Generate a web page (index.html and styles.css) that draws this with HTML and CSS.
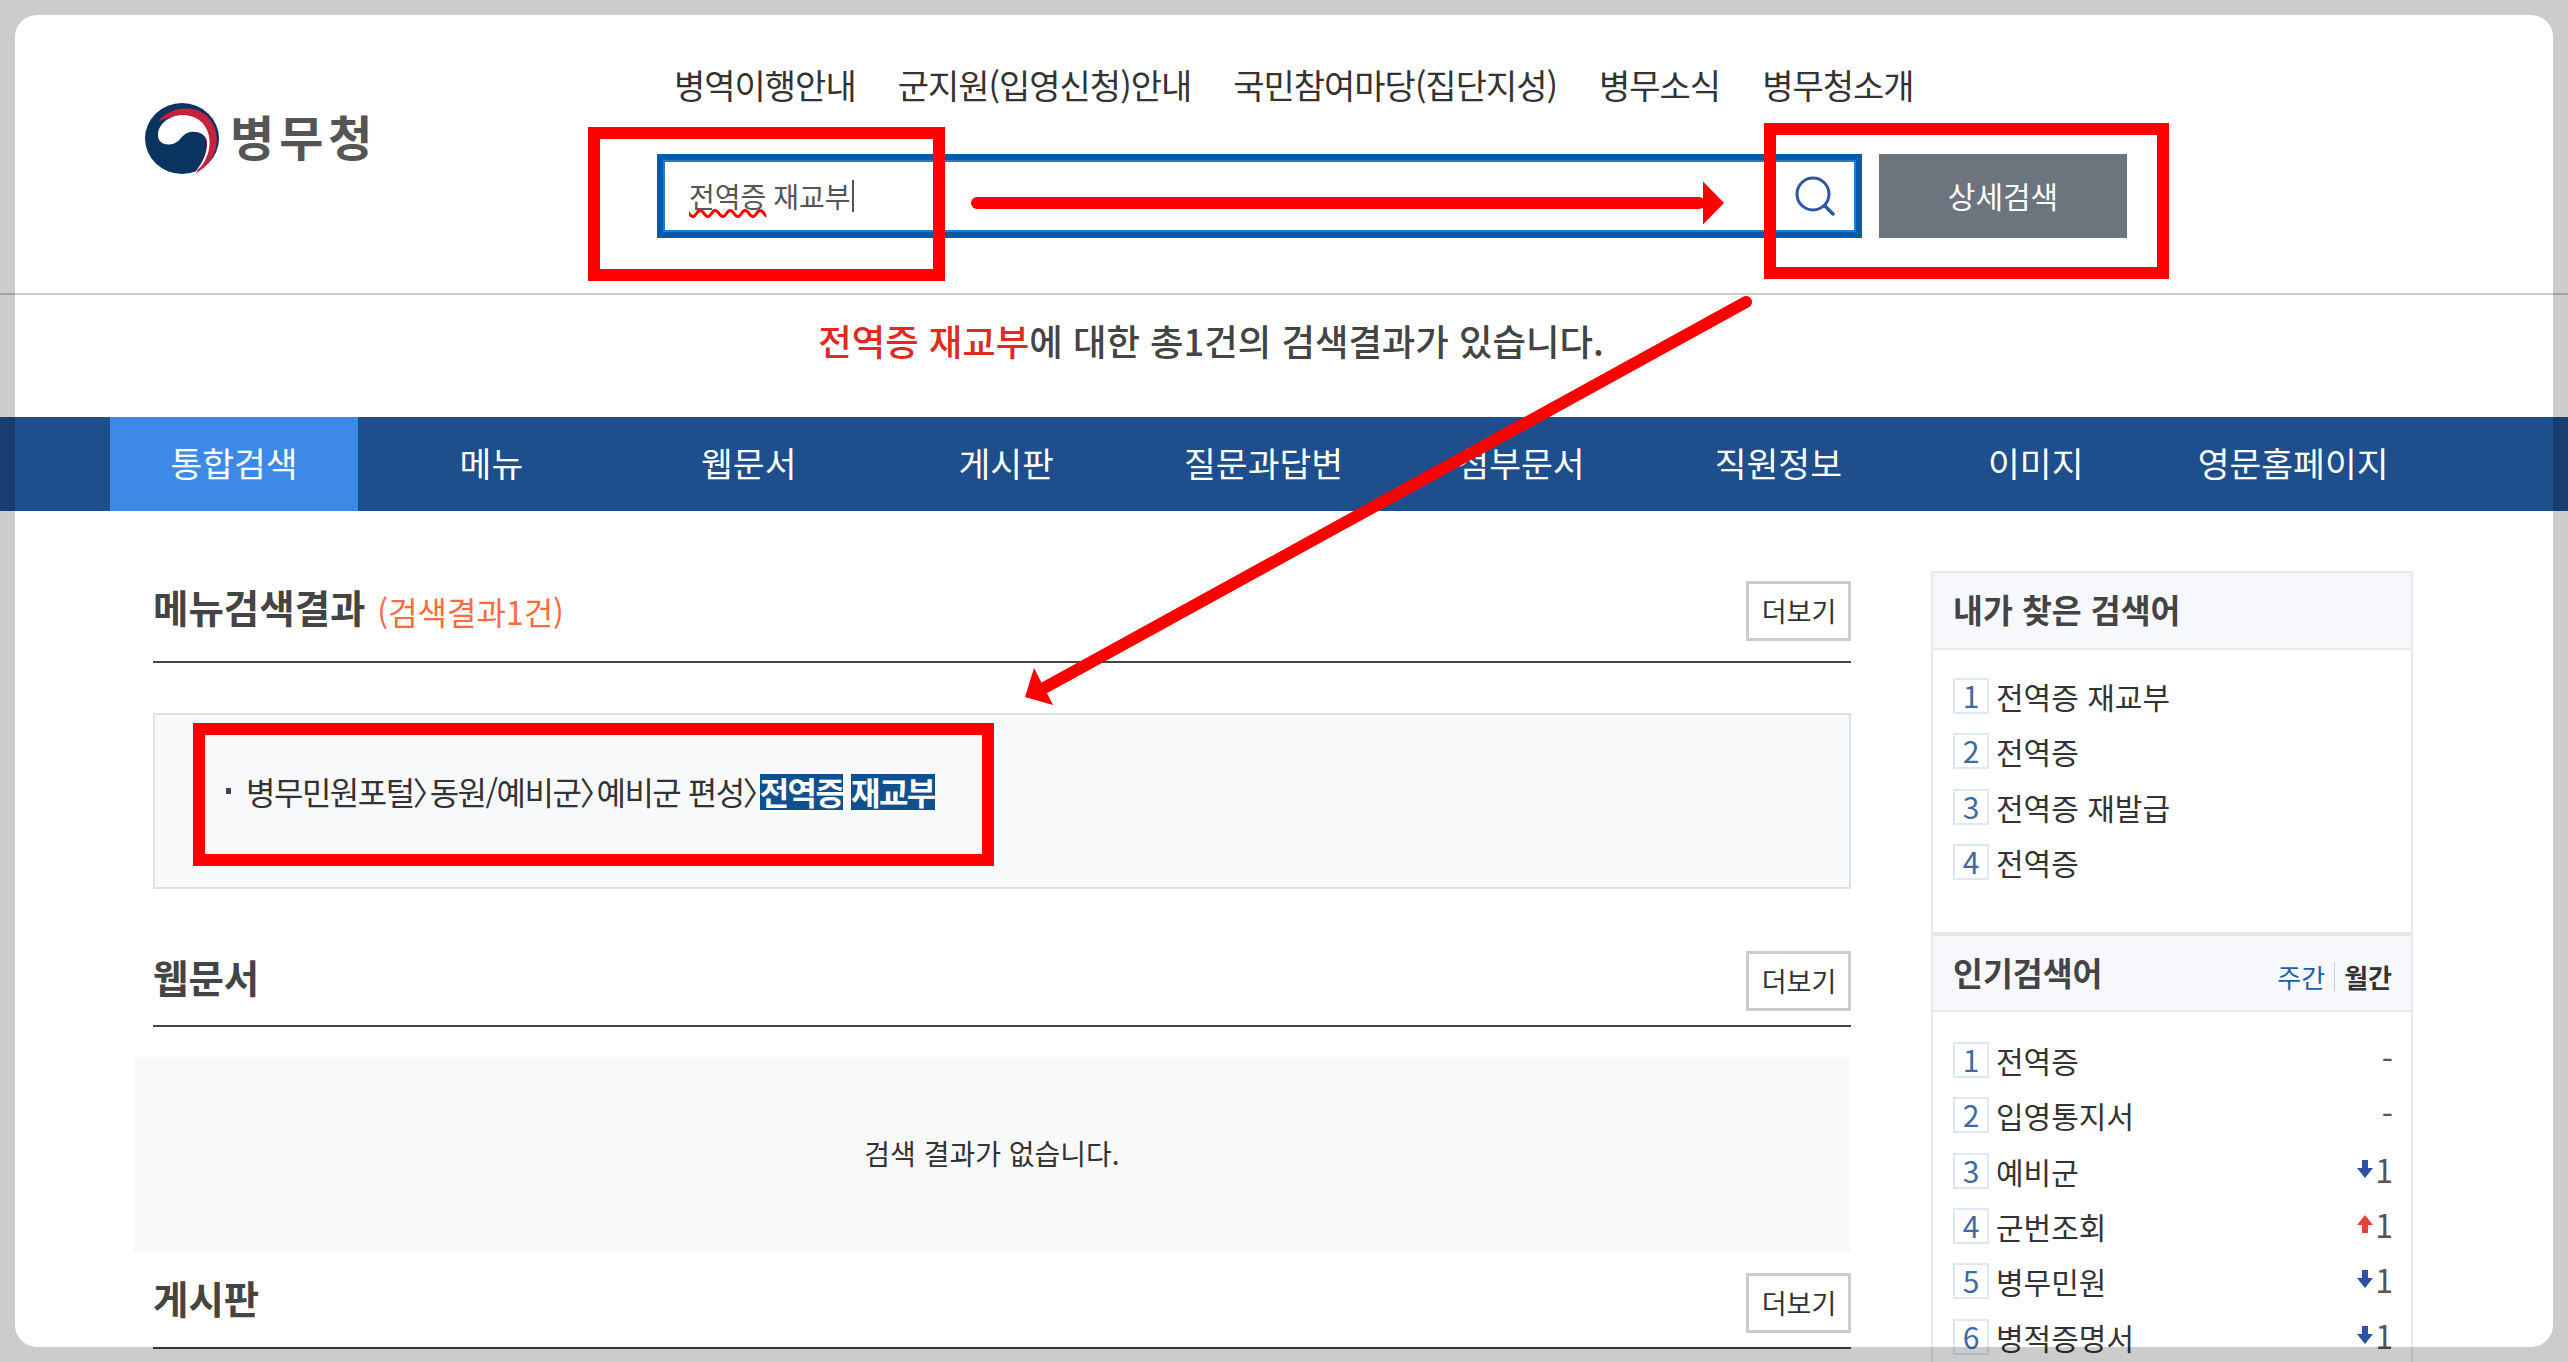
FILE: index.html
```html
<!DOCTYPE html>
<html lang="ko">
<head>
  <meta charset="UTF-8">
  <title>병무청 통합검색</title>
  <link rel="stylesheet" href="styles.css">
</head>
<body>
  <div class="page">
    <header class="top">
      <a class="logo">
        <svg class="logo-mark" viewBox="0 0 74 71" width="74" height="71">
          <ellipse cx="37" cy="35.5" rx="37" ry="35.5" fill="#0b335f"/>
          <path d="M13 19C24 4 48 1 62 13C77 28 76 57 50 71C62 58 66 38 56 24C46 12 26 10 13 19Z" fill="#c8203f"/>
          <path d="M13 32C13 18 31 9 45 13C60 16 67 32 64 46C62 56 57 64 50 69C58 60 63 48 62 38C60 30 50 27 42 30C37 32 35 38 30 40C24 43 13 42 13 32Z" fill="#fff"/>
        </svg>
        <span class="logo-text">병무청</span>
      </a>
      <div class="top-center">
        <ul class="gnb">
          <li>병역이행안내</li>
          <li>군지원(입영신청)안내</li>
          <li>국민참여마당(집단지성)</li>
          <li>병무소식</li>
          <li>병무청소개</li>
        </ul>
        <div class="search-row">
          <div class="search-box">
            <div class="search-value"><span class="typo">전역증</span> 재교부<span class="caret"></span></div>
            <svg class="search-icon" viewBox="0 0 40 40" width="40" height="40">
              <circle cx="18" cy="18" r="16" fill="none" stroke="#2c56a8" stroke-width="3"/>
              <path d="M30 30L38 38" stroke="#2c56a8" stroke-width="3.5" stroke-linecap="round"/>
            </svg>
          </div>
          <div class="detail-btn">상세검색</div>
        </div>
      </div>
    </header>

    <p class="result-msg"><strong>전역증 재교부</strong>에 대한 총1건의 검색결과가 있습니다.</p>

    <nav class="tabs">
      <ul>
        <li class="on">통합검색</li>
        <li>메뉴</li>
        <li>웹문서</li>
        <li>게시판</li>
        <li>질문과답변</li>
        <li>첨부문서</li>
        <li>직원정보</li>
        <li>이미지</li>
        <li>영문홈페이지</li>
      </ul>
    </nav>

    <div class="content">
      <main class="results">
        <section class="sec sec-menu">
          <div class="sec-head">
            <h2>메뉴검색결과 <span class="count">(검색결과1건)</span></h2>
            <a class="more">더보기</a>
          </div>
          <div class="menu-box">
            <span class="dot"></span>
            <span class="path">병무민원포털<span class="sep">〉</span>동원/예비군<span class="sep">〉</span>예비군 편성<span class="sep">〉</span><mark>전역증</mark> <mark>재교부</mark></span>
          </div>
        </section>
        <section class="sec sec-web">
          <div class="sec-head">
            <h2>웹문서</h2>
            <a class="more">더보기</a>
          </div>
          <div class="empty">검색 결과가 없습니다.</div>
        </section>
        <section class="sec sec-board">
          <div class="sec-head">
            <h2>게시판</h2>
            <a class="more">더보기</a>
          </div>
        </section>
      </main>

      <aside class="side">
        <div class="panel-head">
          <h3>내가 찾은 검색어</h3>
        </div>
        <ol class="rank mine">
          <li><span class="num">1</span>전역증 재교부</li>
          <li><span class="num">2</span>전역증</li>
          <li><span class="num">3</span>전역증 재발급</li>
          <li><span class="num">4</span>전역증</li>
        </ol>
        <div class="panel-head hot">
          <h3>인기검색어</h3>
          <div class="period"><span class="week">주간</span><span class="month">월간</span></div>
        </div>
        <ol class="rank popular">
          <li><span class="num">1</span>전역증<span class="rate">-</span></li>
          <li><span class="num">2</span>입영통지서<span class="rate">-</span></li>
          <li><span class="num">3</span>예비군<span class="rate"><svg viewBox="0 0 16 18" width="16" height="18"><path d="M5 0h6v8h5L8 18 0 8h5z" fill="#2b52a6"/></svg>1</span></li>
          <li><span class="num">4</span>군번조회<span class="rate"><svg viewBox="0 0 16 18" width="16" height="18"><path d="M5 18h6v-8h5L8 0 0 10h5z" fill="#e2423a"/></svg>1</span></li>
          <li><span class="num">5</span>병무민원<span class="rate"><svg viewBox="0 0 16 18" width="16" height="18"><path d="M5 0h6v8h5L8 18 0 8h5z" fill="#2b52a6"/></svg>1</span></li>
          <li><span class="num">6</span>병적증명서<span class="rate"><svg viewBox="0 0 16 18" width="16" height="18"><path d="M5 0h6v8h5L8 18 0 8h5z" fill="#2b52a6"/></svg>1</span></li>
        </ol>
      </aside>
    </div>

    <!-- red marks drawn on top of the capture -->
    <svg class="marks" viewBox="0 0 2568 1362" width="2568" height="1362">
      <g fill="none" stroke="#f00" stroke-width="12">
        <rect x="594" y="133" width="345" height="142"/>
        <rect x="1770" y="129" width="393" height="144"/>
        <rect x="199" y="729" width="789" height="131"/>
      </g>
      <rect x="971" y="197" width="734" height="12" rx="6" fill="#f00"/>
      <path d="M1703 181.500L1724 203L1703 224.500Z" fill="#f00"/>
      <path d="M1746 302L1044 688" stroke="#f00" stroke-width="12" stroke-linecap="round"/>
      <path d="M1025 697L1034 668L1053 705Z" fill="#f00"/>
    </svg>

    <div class="frame"></div>
  </div>
</body>
</html>
```

FILE: styles.css
```css
* { box-sizing: border-box; }
html, body { margin: 0; height: 100%; overflow: hidden; background: #fff; }
body { font-family: "Noto Sans CJK KR", "Noto Sans", sans-serif; color: #333; }
ul, ol { list-style: none; margin: 0; padding: 0; }

.page {
  position: relative;
  width: 2568px;
  height: 1362px;
  overflow: hidden;
}

/* top */
.top {
  display: flex;
  height: 295px;
  border-bottom: 2px solid #ccc;
}
.logo {
  display: flex;
  gap: 11px;
  width: 225px;
  height: 71px;
  margin: 103px 0 0 145px;
}
.logo-mark { flex: none; }
.logo-text {
  font-size: 48px;
  font-weight: 700;
  line-height: 71px;
  letter-spacing: 5px;
  color: #555;
  margin-top: -3px;
  white-space: nowrap;
}
.top-center { margin-left: 287px; }
.gnb {
  display: flex;
  gap: 42px;
  height: 154px;
  padding: 60px 0 0 17px;
  font-size: 34px;
  letter-spacing: -1px;
  line-height: 50px;
  color: #333;
  white-space: nowrap;
}
.search-row { display: flex; gap: 17px; }
.search-box {
  display: flex;
  align-items: center;
  justify-content: space-between;
  width: 1205px;
  height: 84px;
  padding: 0 21px 0 26px;
  border: 6px solid #005bac;
  box-shadow: inset 0 0 0 2px #2a7ccb;
}
.search-value {
  display: flex;
  align-items: center;
  gap: 7px;
  font-size: 28px;
  line-height: 40px;
  color: #555;
}
.typo {
  text-decoration: underline wavy #f00 2.500px;
  text-underline-offset: 1px;
}
.caret {
  width: 2px;
  height: 32px;
  margin-left: -6px;
  background: #555;
}
.detail-btn {
  width: 248px;
  height: 84px;
  background: #6c757d;
  color: #fff;
  font-size: 30px;
  line-height: 82px;
  text-align: center;
}

.result-msg {
  height: 122px;
  margin: 0;
  padding: 20px 146px 0 0;
  font-size: 36.400px;
  font-weight: 500;
  line-height: 50px;
  text-align: center;
  color: #444;
}
.result-msg strong { color: #e02a1f; font-weight: 500; }

/* tabs */
.tabs { height: 94px; background: #1f4e8c; }
.tabs ul { display: flex; gap: 9.400px; padding-left: 110px; }
.tabs li {
  width: 248px;
  height: 94px;
  color: #fff;
  font-size: 34.600px;
  line-height: 90px;
  text-align: center;
}
.tabs li.on { background: #3d8ae6; }

/* body columns */
.content { display: flex; padding-left: 153px; }
.results { width: 1698px; }
.sec-head {
  display: flex;
  justify-content: space-between;
  padding-bottom: 20px;
  border-bottom: 2px solid #444;
}
.sec-head h2 {
  margin: 0;
  font-size: 38.500px;
  font-weight: 700;
  line-height: 50px;
  color: #444;
}
.count {
  margin-left: 1px;
  font-size: 32px;
  font-weight: 400;
  color: #ff6b3d;
  vertical-align: -2px;
}
.more {
  width: 105px;
  height: 60px;
  padding-left: 1px;
  border: 3px solid #ccc;
  font-size: 27px;
  line-height: 54px;
  text-align: center;
  color: #333;
}
.sec-menu { padding-top: 70px; }
.menu-box {
  display: flex;
  align-items: center;
  height: 176px;
  margin-top: 50px;
  padding: 0 0 20px 71px;
  background: #f8f9fa;
  border: 2px solid #dee2e6;
  font-size: 32px;
  white-space: pre;
}
.dot {
  width: 5px;
  height: 6px;
  margin-right: 15px;
  background: #445;
}
.path { letter-spacing: -1.500px; }
.sep { font-feature-settings: "palt"; letter-spacing: 0; }
.menu-box mark {
  display: inline-block;
  height: 36px;
  line-height: 34px;
  background: #11508f;
  color: #fff;
  font-weight: 700;
}
.sec-web { margin-top: 62px; }
.sec-web .sec-head { padding-bottom: 14px; }
.empty {
  height: 195px;
  margin: 30px 0 0 -20px;
  background: #f9f9f9;
  font-size: 28px;
  line-height: 192px;
  text-align: center;
}
.sec-board { margin-top: 21px; }
.sec-board .sec-head { padding-bottom: 14px; }
.sec-board h2 { margin-top: -1px; }

/* sidebar */
.side {
  width: 482px;
  height: 1000px;
  margin: 60px 0 0 80px;
  border: 2px solid #e8e8e8;
  border-bottom: 0;
}
.panel-head {
  display: flex;
  justify-content: space-between;
  height: 77px;
  padding: 0 19px 0 20px;
  background: #f7f8fc;
  border-bottom: 2px solid #e8e8e8;
}
.panel-head.hot { height: 80px; border-top: 4px solid #e8e8e8; }
.panel-head h3 {
  margin: 0;
  font-size: 32.500px;
  font-weight: 700;
  line-height: 72px;
  color: #444;
}
.period { display: flex; font-size: 26px; line-height: 82px; }
.week { padding-right: 9px; color: #1a5fa8; }
.month {
  position: relative;
  padding-left: 10px;
  font-weight: 700;
  color: #333;
}
.month::before {
  content: "";
  position: absolute;
  left: 0;
  top: 26px;
  height: 29px;
  border-left: 1px solid #ccc;
}
.rank { padding: 28px 20px 0 20px; }
.rank.mine { height: 282px; }
.rank.popular { padding-top: 30px; }
.rank li {
  display: flex;
  align-items: center;
  height: 55.300px;
  padding-bottom: 19px;
  font-size: 30px;
  color: #333;
}
.num {
  width: 36px;
  height: 36px;
  margin-right: 7px;
  border: 2px solid #dce8f5;
  font-size: 30px;
  line-height: 30px;
  text-align: center;
  color: #3e6aa5;
}
.rate {
  display: flex;
  align-items: center;
  gap: 2px;
  margin: 0 -2px 0 auto;
  padding-bottom: 4px;
  font-size: 32px;
  color: #555;
}

/* overlays */
.marks { position: absolute; left: 0; top: 0; }
.frame {
  position: absolute;
  inset: 15px;
  border-radius: 22px;
  box-shadow: 0 0 0 60px rgba(0, 0, 0, 0.2);
}
```
